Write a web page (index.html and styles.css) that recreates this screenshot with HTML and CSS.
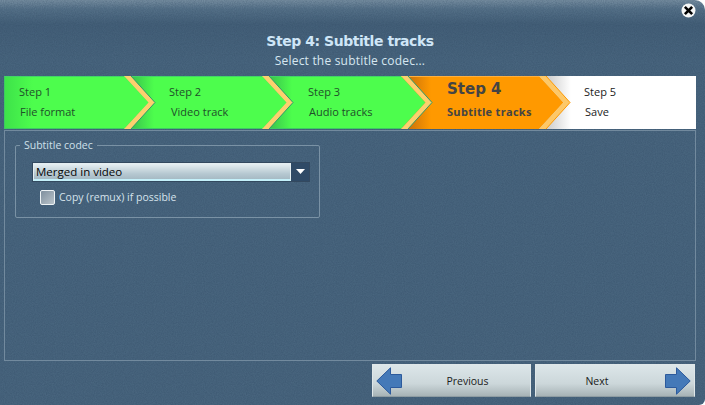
FILE: index.html
```html
<!DOCTYPE html>
<html lang="en">
<head>
<meta charset="utf-8">
<title>Step 4: Subtitle tracks</title>
<link rel="stylesheet" href="styles.css">
</head>
<body>
<div class="window">
  <button class="close" aria-label="Close">
    <svg width="15" height="15" viewBox="0 0 15 15"><circle cx="7.5" cy="7.5" r="7" fill="#f4f6f6"/><path d="M4.8 4.8l5.4 5.4M10.2 4.8l-5.4 5.4" stroke="#000" stroke-width="2.6" stroke-linecap="square"/></svg>
  </button>
  <header class="head">
    <h1 class="title">Step 4: Subtitle tracks</h1>
    <p class="subtitle">Select the subtitle codec...</p>
  </header>
  <nav class="steps">
    <div class="step done first"><span class="num">Step 1</span><span class="name">File format</span>
      <svg class="chev" width="32" height="53" viewBox="0 0 32 53"><path d="M0 0L24.500 26.500L0 53Z" fill="#4dfd4d"/><path d="M0 0H7L31 26.500L7 53H0L24.500 26.500Z" fill="#fdd06e"/><path d="M7 0L31 26.500L7 53" fill="none" stroke="#2f9a6a" stroke-width="1"/></svg>
    </div>
    <div class="step done second"><span class="num">Step 2</span><span class="name">Video track</span>
      <svg class="chev" width="32" height="53" viewBox="0 0 32 53"><path d="M0 0L24.500 26.500L0 53Z" fill="#4dfd4d"/><path d="M0 0H7L31 26.500L7 53H0L24.500 26.500Z" fill="#fdd06e"/><path d="M7 0L31 26.500L7 53" fill="none" stroke="#2f9a6a" stroke-width="1"/></svg>
    </div>
    <div class="step done third"><span class="num">Step 3</span><span class="name">Audio tracks</span>
      <svg class="chev" width="32" height="53" viewBox="0 0 32 53"><path d="M0 0L24.500 26.500L0 53Z" fill="#4dfd4d"/><path d="M0 0H7L31 26.500L7 53H0L24.500 26.500Z" fill="#fdd06e"/><path d="M7 0L31 26.500L7 53" fill="none" stroke="#2f9a6a" stroke-width="1"/></svg>
    </div>
    <div class="step current"><span class="num">Step 4</span><span class="name">Subtitle tracks</span>
      <svg class="chev" width="32" height="53" viewBox="0 0 32 53"><path d="M0 0L24.500 26.500L0 53Z" fill="#ff9900"/><path d="M0 0H7L31 26.500L7 53H0L24.500 26.500Z" fill="#fdc868"/><path d="M7 0L31 26.500L7 53" fill="none" stroke="#ff9900" stroke-width="1"/></svg>
    </div>
    <div class="step todo"><span class="num">Step 5</span><span class="name">Save</span></div>
  </nav>
  <main class="panel">
    <fieldset class="group">
      <legend class="legend">Subtitle codec</legend>
      <div class="combo" role="combobox" aria-expanded="false">
        <span class="combo-text">Merged in video</span>
        <span class="combo-btn"><svg width="9" height="5" viewBox="0 0 9 5"><path d="M0 0H9L4.500 5Z" fill="#fff"/></svg></span>
      </div>
      <label class="check"><span class="box"></span><span>Copy (remux) if possible</span></label>
    </fieldset>
  </main>
  <footer class="foot">
    <button class="nav prev">
      <svg class="arrow" width="26" height="28" viewBox="0 0 26 28"><path d="M.8 14L14.500.8V7.500H25.500V20.500H14.500V27.200Z" fill="#4479b8" stroke="#2c5a9c"/></svg>
      <span class="nav-label">Previous</span>
    </button>
    <button class="nav next">
      <span class="nav-label">Next</span>
      <svg class="arrow" width="26" height="28" viewBox="0 0 26 28"><path d="M25.200 14L11.500.8V7.500H.5V20.500H11.500V27.200Z" fill="#4479b8" stroke="#2c5a9c"/></svg>
    </button>
  </footer>
</div>
</body>
</html>
```
FILE: styles.css
```css
* { box-sizing: border-box; }
html, body { margin: 0; padding: 0; }
body { width: 705px; height: 405px; overflow: hidden; background: #fff; font-family: "Open Sans", "Liberation Sans", sans-serif; }
.window {
  position: relative;
  width: 705px; height: 405px;
  display: flex; flex-direction: column;
  padding: 0 9px 8px 4px;
  border-radius: 0 10px 6px 0;
  background-color: #4b6881;
  background-image:
    url("data:image/svg+xml,%3Csvg xmlns='http://www.w3.org/2000/svg' width='200' height='200'%3E%3Cfilter id='n' color-interpolation-filters='sRGB'%3E%3CfeTurbulence type='fractalNoise' baseFrequency='.9' numOctaves='2'/%3E%3CfeColorMatrix values='0 0 0 0 .16 0 0 0 0 .26 0 0 0 0 .36 0 0 0 .4 0'/%3E%3C/filter%3E%3Crect width='200' height='200' filter='url(%23n)'/%3E%3C/svg%3E"),
    linear-gradient(#7f96a8 0, #5a768d 9px, #46627b 24px, #4b6881 60px);
}
.close { position: absolute; top: 3px; right: 9px; width: 15px; height: 15px; padding: 0; border: 0; background: none; display: block; }
.close svg { display: block; }
.head { height: 76px; padding-top: 31px; text-align: center; }
.title { margin: 0; font: bold 14px/20px "DejaVu Sans", sans-serif; letter-spacing: -.45px; color: #cfe6f7; }
.subtitle { margin: 1px 0 0; font-size: 12px; letter-spacing: .2px; line-height: 17px; color: #d6e6f0; }
.steps { display: flex; height: 53px; flex: none; font-size: 11px; }
.step { position: relative; height: 53px; display: flex; flex-direction: column; }
.step .num { position: absolute; top: 8px; line-height: 16px; white-space: nowrap; }
.step .name { position: absolute; top: 28px; line-height: 16px; white-space: nowrap; }
.done { color: #1f4f2a; border-top: 1px solid #42d468; border-bottom: 1px solid #3ccb62; }
.done .chev { top: -1px; }
.done .num { top: 7px; }
.done .name { top: 27px; }
.first { width: 120px; border-left: 1px solid #3ccb62; background: linear-gradient(90deg, #3ee24a, #4dfd4d 28px); }
.first .num { left: 14px; } .first .name { left: 15px; }
.second { width: 138px; background: linear-gradient(90deg, #38bf4c 6px, #4dfd4d 30px); }
.second .num { left: 45px; } .second .name { left: 47px; }
.third { width: 139px; background: linear-gradient(90deg, #38bf4c 6px, #4dfd4d 30px); }
.third .num { left: 46px; } .third .name { left: 47px; }
.current { width: 138px; color: #444; background: linear-gradient(90deg, #c8700a 6px, #ff9900 30px); border-top: 1px solid #ffb040; }
.current .chev { top: -1px; }
.current .num { left: 46px; top: 1px; font: bold 15px/22px "DejaVu Sans", sans-serif; }
.current .name { left: 46px; top: 27px; font-weight: 700; letter-spacing: .3px; }
.todo { flex: 1; color: #222; background: linear-gradient(90deg, #c8c8c8 6px, #fff 32px); }
.todo .num { left: 45px; } .todo .name { left: 46px; }
.chev { position: absolute; left: 100%; top: 0; z-index: 2; display: block; }
.panel { height: 232px; margin-top: 1px; padding: 8px 0 0 10px; border: 1px solid #728a9e; }
.group { width: 305px; height: 79px; margin: 0; padding: 0; border: 1px solid #7a92a5; border-radius: 2px; position: relative; }
.legend { margin-left: 4px; padding: 0 4px; font-size: 10.500px; line-height: 13px; color: #cfe0ea; }
.combo { display: flex; margin: 10px 9px 0 16px; height: 20px; border: 1px solid #33495f; background: #2f4a66; }
.combo-text { flex: 1; padding-left: 2px; font-size: 11.500px; line-height: 15px; color: #050505; border: 1px solid #e4eef1; border-bottom: 2px solid #c4f0fa; background: linear-gradient(#e6eff2, #b6c8d1 65%, #a6bac4); }
.combo-btn { width: 18px; display: flex; align-items: center; justify-content: center; background: #2f4a66; }
.check { display: flex; align-items: center; margin: 8px 0 0 24px; gap: 4px; font-size: 10.500px; line-height: 15px; color: #d5e3ec; }
.box { width: 15px; height: 15px; border: 1px solid #eef3f5; border-radius: 2px; background: linear-gradient(135deg, #7f8f9d, #b9c3ca); }
.foot { display: flex; justify-content: flex-end; gap: 4px; margin-top: 3px; padding-right: 1px; }
.nav { width: 160px; height: 33px; display: flex; align-items: center; padding: 0 3px; border: 1px solid #dfe7e9; border-bottom-color: #8e9ca2; background: linear-gradient(#dce6e9, #ccd7da 60%, #a7b3b6); font: 10.500px "Open Sans", "Liberation Sans", sans-serif; color: #1a1a1a; }
.arrow { flex: none; display: block; }
.prev { width: 159px; }
.prev .nav-label { flex: 1; text-align: center; padding-left: 6px; }
.next .nav-label { flex: 1; text-align: center; padding-right: 10px; }
```
